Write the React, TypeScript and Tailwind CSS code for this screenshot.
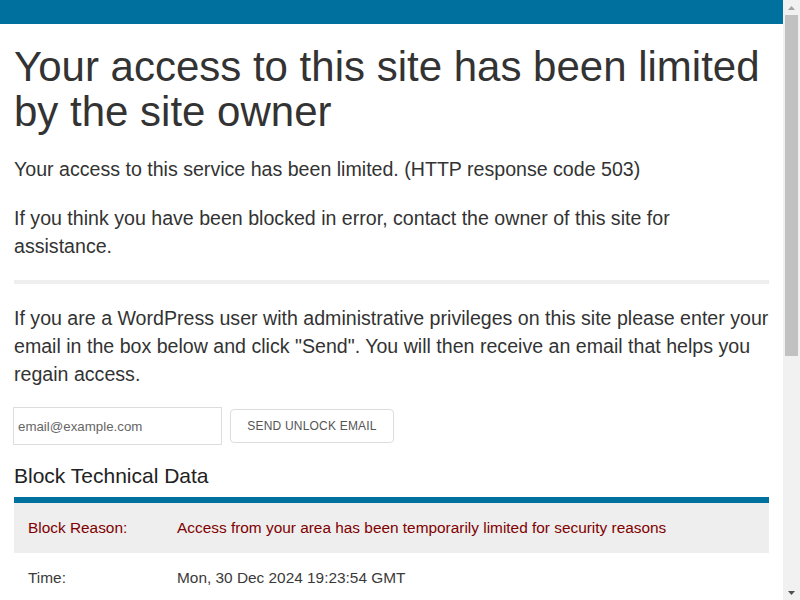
import React from "react";

export default function App() {
  return (
    <div className="w-[800px] h-[600px] flex overflow-hidden bg-white" style={{ fontFamily: '"Liberation Sans", Arial, sans-serif' }}>
      <div className="flex-1 h-full overflow-hidden flex flex-col">
        <div className="h-[24px] bg-[#00709e] shrink-0" />
        <div className="px-[14px] text-[#333333]">
          <h1 className="text-[42px] leading-[45px] mt-[20px] mb-[21px] font-normal">
            Your access to this site has been limited by the site owner
          </h1>
          <p className="text-[19.6px] leading-[28px] mb-[21px]">
            Your access to this service has been limited. (HTTP response code 503)
          </p>
          <p className="text-[19.6px] leading-[28px]">
            If you think you have been blocked in error, contact the owner of this site for assistance.
          </p>
          <div className="h-[4px] bg-[#eeeeee] mt-[20px] mb-[20px]" />
          <p className="text-[19.6px] leading-[28px]">
            If you are a WordPress user with administrative privileges on this site please enter your email in the box below and click "Send". You will then receive an email that helps you regain access.
          </p>
          <div className="flex items-center gap-[8px] mt-[19px] -ml-[1px]">
            <input
              type="text"
              placeholder="email@example.com"
              className="w-[209px] h-[38px] border border-[#dddddd] px-[4px] text-[13.3px] placeholder:text-[#666666] outline-none"
            />
            <button className="w-[164px] h-[34px] border border-[#dddddd] rounded-[4px] bg-white text-[12px] text-[#555555] tracking-[0.2px]">
              SEND UNLOCK EMAIL
            </button>
          </div>
          <h2 className="text-[21px] leading-[28px] mt-[17px] font-normal text-[#222222]">Block Technical Data</h2>
          <div className="h-[6px] bg-[#00709e] mt-[7px]" />
          <div className="flex items-center h-[50px] bg-[#eeeeee] text-[15.4px] text-[#800000]">
            <div className="w-[163px] pl-[14px]">Block Reason:</div>
            <div>Access from your area has been temporarily limited for security reasons</div>
          </div>
          <div className="flex items-center h-[50px] text-[15.4px] text-[#3a3a3a]">
            <div className="w-[163px] pl-[14px]">Time:</div>
            <div>Mon, 30 Dec 2024 19:23:54 GMT</div>
          </div>
        </div>
      </div>
      <div className="w-[17px] h-full bg-[#f1f1f1] flex flex-col items-center shrink-0">
        <div className="h-[15px] w-full flex items-center justify-center">
          <svg width="7" height="4" viewBox="0 0 7 4"><path d="M0 4 L3.5 0 L7 4 Z" fill="#a3a3a3" /></svg>
        </div>
        <div className="w-[13px] h-[341px] bg-[#c1c1c1]" />
        <div className="flex-1" />
        <div className="h-[15px] w-full flex items-center justify-center">
          <svg width="7" height="4" viewBox="0 0 7 4"><path d="M0 0 L7 0 L3.5 4 Z" fill="#505050" /></svg>
        </div>
      </div>
    </div>
  );
}
